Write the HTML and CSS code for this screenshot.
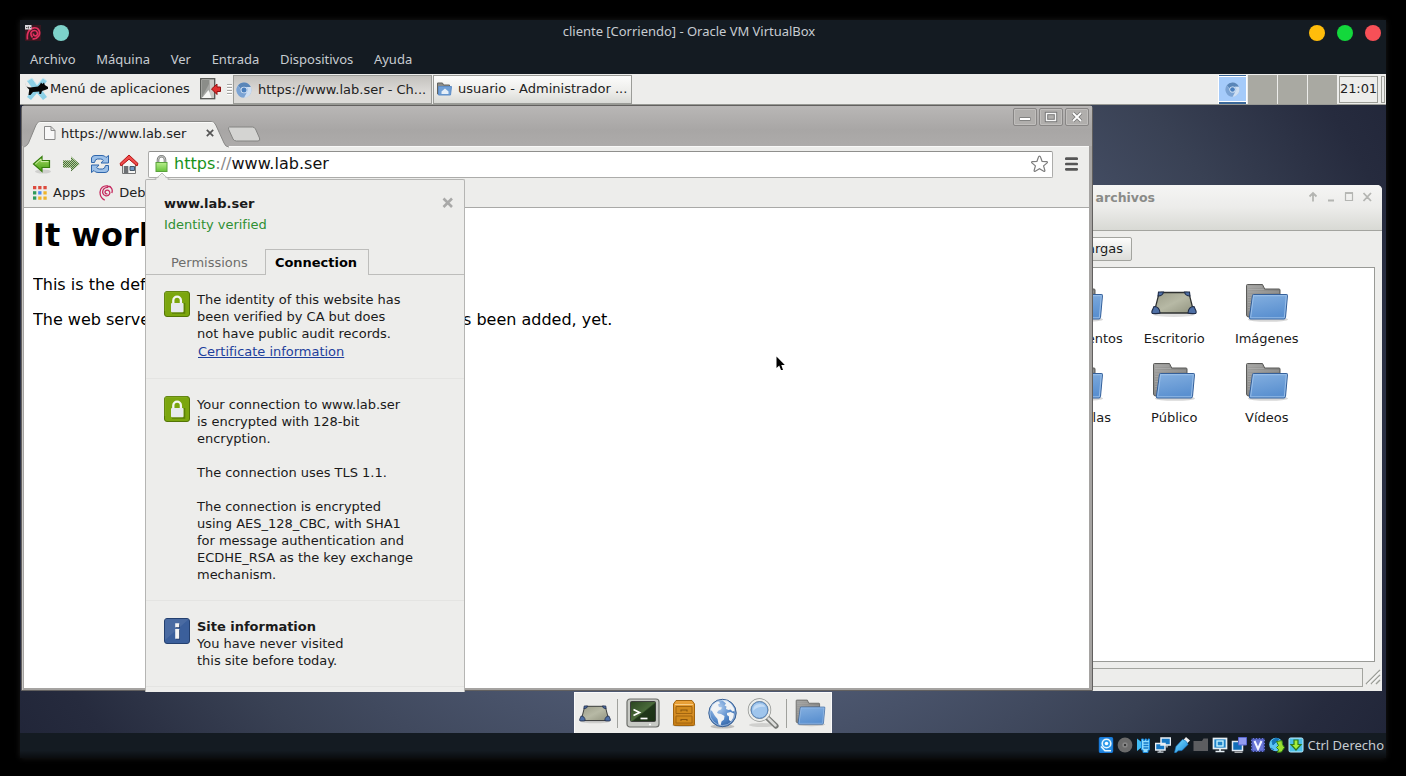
FILE: index.html
```html
<!DOCTYPE html>
<html lang="es">
<head>
<meta charset="utf-8">
<title>cliente [Corriendo] - Oracle VM VirtualBox</title>
<link rel="stylesheet" href="styles.css">
</head>
<body>
<svg class="defs" width="0" height="0" aria-hidden="true">
  <defs>
    <linearGradient id="gBlue" x1="0" y1="0" x2="0.3" y2="1"><stop offset="0" stop-color="#85b0e0"/><stop offset="1" stop-color="#5a90d0"/></linearGradient>
    <linearGradient id="gGrey" x1="0" y1="0" x2="1" y2="1"><stop offset="0" stop-color="#a4a4a2"/><stop offset="1" stop-color="#6c6c6a"/></linearGradient>
    <linearGradient id="gDesk" x1="0" y1="0" x2="1" y2="1"><stop offset="0" stop-color="#9b9c88"/><stop offset="0.5" stop-color="#b7b9a5"/><stop offset="1" stop-color="#8f917d"/></linearGradient>
    <linearGradient id="gGreen" x1="0" y1="0" x2="0" y2="1"><stop offset="0" stop-color="#a6d866"/><stop offset="1" stop-color="#46a012"/></linearGradient>
    <linearGradient id="gLock" x1="0" y1="0" x2="0" y2="1"><stop offset="0" stop-color="#b9ef8d"/><stop offset="1" stop-color="#67c23c"/></linearGradient>
    <linearGradient id="gTerm" x1="0" y1="0" x2="1" y2="1"><stop offset="0" stop-color="#2a4420"/><stop offset="0.5" stop-color="#4a6a3a"/><stop offset="0.55" stop-color="#20371a"/><stop offset="1" stop-color="#1c3015"/></linearGradient>
    <linearGradient id="gOrange" x1="0" y1="0" x2="0" y2="1"><stop offset="0" stop-color="#eba33a"/><stop offset="1" stop-color="#c57c13"/></linearGradient>
    <radialGradient id="gGlobe" cx="0.35" cy="0.3" r="0.8"><stop offset="0" stop-color="#b4cff0"/><stop offset="0.6" stop-color="#5287c9"/><stop offset="1" stop-color="#2e5c9c"/></radialGradient>
    <linearGradient id="gCyan" x1="0" y1="0" x2="1" y2="1"><stop offset="0" stop-color="#79e0ff"/><stop offset="1" stop-color="#1a86dc"/></linearGradient>
    <symbol id="folder" viewBox="0 0 44 40">
      <ellipse cx="23" cy="36.500" rx="20" ry="2.300" fill="#000" opacity="0.16"/>
      <path d="M1.500 2.500q0-1 1-1h15l2.200 4.500H34q1 0 1 1V34H4q-2.500 0-2.500-2z" fill="url(#gGrey)" stroke="#5a5a58"/>
      <path d="M3 4h14M3 6.500h16M3 9h31M3 12h4M3 14.500h3M3 17h3M3 19.500h3M3 22h2.500M3 24.500h2M3 27h2" stroke="#bbb" stroke-width="0.800" opacity="0.6"/>
      <path d="M7.500 12.500q0-1 1-1h33.300q.8 0 .7 1L40.500 34.500q-.2 1.500-1.600 1.500H5.500q-1.300 0-1.200-1.200z" fill="url(#gBlue)" stroke="#35609a"/>
      <path d="M8.500 12.700h32.800L39.300 34.800H5.600z" fill="none" stroke="#a5c6ec" stroke-width="0.800"/>
    </symbol>
    <symbol id="desk" viewBox="0 0 46 28">
      <ellipse cx="23" cy="23.500" rx="21" ry="2.500" fill="#000" opacity="0.13"/>
      <path d="M10 1.500h26q1.500 0 2.200 1.700L43 22H3L7.800 3.200Q8.500 1.500 10 1.500z" fill="url(#gDesk)" stroke="#2e3030" stroke-width="1.300"/>
      <path d="M7.500 1h5q-.8 4-5.500 4zM38.500 1h-5q.8 4 5.500 4zM3 15.500q5.500 0 6 6.500-1 .8-7.500.5-1-.5-.5-2.500zM43 15.500q-5.500 0-6 6.500 1 .8 7.500.5 1-.5.5-2.500z" fill="#4e6fa5" stroke="#1f2c48" stroke-width="1.100"/>
    </symbol>
    <symbol id="chromium" viewBox="0 0 16 16">
      <circle cx="8" cy="8" r="7.600" fill="#a3c0e4"/>
      <path d="M8 .4A7.600 7.600 0 0 1 14.800 5H8a3 3 0 0 0-3 2L2 3.500A7.600 7.600 0 0 1 8 .4z" fill="#5a86b8"/>
      <path d="M14.800 5A7.600 7.600 0 0 1 8 15.600l3-5.500A3.500 3.500 0 0 0 10.500 5z" fill="#cfdff2"/>
      <path d="M2 3.500A7.600 7.600 0 0 0 8 15.600l2.500-4.500Q6.500 12 5 8.600z" fill="#7ba3d3"/>
      <circle cx="8" cy="8" r="3.300" fill="#d6e4f5"/><circle cx="8" cy="8" r="2.500" fill="#4a7fbd"/>
    </symbol>
    <symbol id="badgelock" viewBox="0 0 26 26">
      <rect x="0.500" y="0.500" width="25" height="25" rx="2.500" fill="#7ba60e" stroke="#537505"/>
      <path d="M1 20V3q0-2 2-2h20" fill="none" stroke="#98bd3c" opacity="0.5"/>
      <path d="M9.300 13V9.500a3.800 3.800 0 0 1 7.600 0V13" fill="none" stroke="#f4f6f2" stroke-width="2.300"/>
      <path d="M8 22h12.500V12" fill="none" stroke="#466605" stroke-width="1.500" opacity="0.6"/>
      <rect x="7" y="12" width="12.500" height="9.300" rx="1" fill="#e7eaed"/>
    </symbol>
  </defs>
</svg>

<div class="vm">
  <header class="vm-title">
    <svg class="debian-app" width="16" height="16" viewBox="0 0 16 16"><rect width="16" height="16" fill="#3a1720"/><path d="M7.500 12.500C4.500 9 6 5.500 9.500 5.500c3 0 4 3.500 2 5-1.500 1-3.500 0-3-2M2.500 14.500C1.500 8 4 3.500 9 2.800c5-.5 7 5 4.500 8.500-1.500 2-4 3-6 2.500" fill="none" stroke="#e0305f" stroke-width="1.700"/><rect width="6.500" height="4.500" fill="#d7d7dd"/><path d="M1 2.500h1.500M3.500 1.500v2M5 2.500h1" stroke="#555"/></svg>
    <span class="dot teal"></span>
    <h1 class="vm-name">cliente [Corriendo] - Oracle VM VirtualBox</h1>
    <div class="dots"><span class="dot amber"></span><span class="dot green"></span><span class="dot red"></span></div>
  </header>
  <nav class="vm-menu"><span>Archivo</span><span>Máquina</span><span>Ver</span><span>Entrada</span><span>Dispositivos</span><span>Ayuda</span></nav>

  <main class="desktop">
    <div class="panel">
      <div class="appmenu">
        <svg width="24" height="24" viewBox="0 0 24 24"><path d="M2 4l5-3 5 7 6-7 4 3-6 8 6 8-4 3-6-7-6 7-4-3 6-8z" fill="#8dd0e6"/><path d="M2 4l5-3 5 7 6-7 4 3" fill="none" stroke="#c9e9f2"/><path d="M0 5c1 5 2 5 5 5.500l8-1 2-2 1-2 1.500 1.500 1.500-1.500.8 2.500 3.200 2v1.700L20 13l-3 1-1 3h-1.700v-2.500L8 15l-2.500 3H3.500l.7-5.500C2 11 .5 8 0 5z" fill="#060606"/></svg>
        <span>Menú de aplicaciones</span>
      </div>
      <svg class="logout" width="21" height="22" viewBox="0 0 21 22"><rect x="0.700" y="0.700" width="14" height="20" fill="#c9c9c5" stroke="#555753" stroke-width="1.300"/><path d="M2 2h7.500v11L4 19H2z" fill="#8b8d89"/><path d="M2 19L9.500 5v9z" fill="#a5a6a3"/><path d="M2 20l6.500-8 3 8z" fill="#f7f7f5"/><path d="M11.500 11l5.500-5v3h3.500v4.500H17v3z" fill="#e03030" stroke="#930f0f"/></svg>
      <span class="handle"></span>
      <div class="task active"><svg width="16" height="16"><use href="#chromium"/></svg><span>https://www.lab.ser - Ch...</span></div>
      <div class="task"><svg width="15" height="14" viewBox="0 0 15 14"><path d="M.5 1h5l1 2h6v9H.5z" fill="#8b8c88" stroke="#62635f"/><path d="M1.500 4.500h13l-1 8.500H1.500z" fill="#6f9fd5" stroke="#5d8cc6"/><path d="M4.500 9.500L8 6.500l3.500 3V12h-7z" fill="#e6eff8"/></svg><span>usuario - Administrador ...</span></div>
      <div class="pager"><i class="ws current"><svg width="15" height="15"><use href="#chromium"/></svg></i><i class="ws"></i><i class="ws"></i><i class="ws"></i></div>
      <time class="clock">21:01</time>
      <span class="endgrip"></span>
    </div>

    <section class="files">
      <header class="files-title"><b>usuario - Administrador de archivos</b>
        <svg width="64" height="12" viewBox="0 0 64 12" fill="none" stroke="#b4b5b2" stroke-width="1.800"><path d="M5 10.500V2M1.500 5.500L5 2l3.500 3.500M20 9.500h6M55.500 2l7.500 8M63 2l-7.500 8"/><path d="M37.500 2h7v7.500h-7z" stroke-width="1.200"/><path d="M37 2h8" /></svg>
      </header>
      <div class="files-path"><span class="crumb">Descargas</span></div>
      <div class="files-view">
        <figure><svg width="44" height="40"><use href="#folder"/></svg><figcaption>Documentos</figcaption></figure>
        <figure><svg class="deskicon" width="46" height="28"><use href="#desk"/></svg><figcaption>Escritorio</figcaption></figure>
        <figure><svg width="44" height="40"><use href="#folder"/></svg><figcaption>Imágenes</figcaption></figure>
        <figure><svg width="44" height="40"><use href="#folder"/></svg><figcaption>Plantillas</figcaption></figure>
        <figure><svg width="44" height="40"><use href="#folder"/></svg><figcaption>Público</figcaption></figure>
        <figure><svg width="44" height="40"><use href="#folder"/></svg><figcaption>Vídeos</figcaption></figure>
      </div>
      <footer class="files-status"><span></span><svg width="16" height="16" viewBox="0 0 16 16"><path d="M1 15L15 1M6 15l9-9M11 15l4-4" stroke="#9b9d97" stroke-width="1.400"/><path d="M2.500 15L15 2.500M7.500 15L15 7.500" stroke="#fff"/></svg></footer>
    </section>

    <section class="browser">
      <div class="strip">
        <div class="tab">
          <svg class="tabshape" width="206" height="28" viewBox="0 0 206 28"><path d="M0 26Q3 25 4.500 22L12 4Q13.300.5 17 .5H187q3.500 0 4.800 3.500L200 22q1.500 4 5 4V28H0z" fill="#ededeb"/><path d="M0 26Q3 25 4.500 22L12 4Q13.300.5 17 .5H187q3.500 0 4.800 3.500L200 22q1.500 4 5 4" fill="none" stroke="#888886"/><path d="M14 2.500q1-1 3-1H187q2 0 3 1" fill="none" stroke="#fafaf9"/></svg>
          <svg class="page" width="12" height="14" viewBox="0 0 12 14"><path d="M.5.5h6.500l4 4v9H.5zM7 .5v4h4" fill="#f8f8f8" stroke="#8a8a8a"/></svg>
          <span>https://www.lab.ser</span>
          <svg class="x" width="8" height="8" viewBox="0 0 8 8"><path d="M.8.800l6.400 6.400M7.200.800L.8 7.200" stroke="#555" stroke-width="1.700"/></svg>
        </div>
        <svg class="newtab" width="34" height="17" viewBox="0 0 34 17"><path d="M1.500 1H24.500q2 0 3 2l4 9q1 3-1.500 3H8.500q-2.500 0-3.500-2L.7 3.500Q0 1 1.500 1z" fill="#d4d4d2" stroke="#848482"/></svg>
        <div class="winbtns">
          <i><svg width="24" height="18" viewBox="0 0 24 18"><path d="M6.500 11h11" stroke="#777" stroke-width="3.600"/><path d="M7 11h10" stroke="#fff" stroke-width="2"/></svg></i>
          <i><svg width="24" height="18" viewBox="0 0 24 18"><rect x="7.500" y="5.500" width="9" height="7" fill="none" stroke="#777" stroke-width="3.400"/><rect x="7.500" y="5.500" width="9" height="7" fill="none" stroke="#f6f6f6" stroke-width="1.400"/></svg></i>
          <i><svg width="24" height="18" viewBox="0 0 24 18"><path d="M8 5l8 8M16 5l-8 8" stroke="#777" stroke-width="3.400"/><path d="M8 5l8 8M16 5l-8 8" stroke="#fff" stroke-width="1.800"/></svg></i>
        </div>
      </div>
      <div class="toolbar">
        <svg width="20" height="20" viewBox="0 0 20 20"><ellipse cx="11" cy="17.500" rx="8" ry="2" fill="#000" opacity="0.12"/><path d="M1.500 10L10 2.500V6.500h7.500v7H10v4z" fill="url(#gGreen)" stroke="#357d0d" stroke-width="1.200"/><path d="M3.300 10L9 5v2.600h7.500" fill="none" stroke="#d2f0ac"/></svg>
        <svg class="fwd" width="20" height="20" viewBox="0 0 20 20"><defs><pattern id="chk" width="2" height="2" patternUnits="userSpaceOnUse"><path d="M0 0h1v1H0zM1 1h1v1H1z" fill="#4a6a3a"/></pattern></defs><path d="M18.500 10L10 2.500V6.500H2v7h8v4z" fill="#b4d29c"/><path d="M18.500 10L10 2.500V6.500H2v7h8v4z" fill="url(#chk)"/></svg>
        <svg class="reload" width="20" height="20" viewBox="0 0 20 20" fill="#9cc0e8" stroke="#2f66ab"><path d="M1.500 8.500V4Q2 1.500 5 1.500h7q3 0 4 2L18.500 1.500V9H11l2.300-2.600Q12.500 5 10.500 5H7.500Q5 5 4.500 8.500z"/><path d="M18.500 11.500V16Q18 18.500 15 18.500H8q-3 0-4-2L1.500 18.500V11H9l-2.300 2.600Q7.500 15 9.500 15h3q2.500 0 3-3.500z"/></svg>
        <svg class="home" width="20" height="21" viewBox="0 0 20 21"><path d="M3.500 10v9.500h13V10L10 4z" fill="#f6f6f4" stroke="#777"/><path d="M4.800 12h4.500v7.500H4.800z" fill="#6d7073"/><path d="M11 12.500h4.500v4H11z" fill="#6f97c5" stroke="#456"/><path d="M10 1l9 8.500-1 2.500-8-6.800L2 12 1 9.500z" fill="#ef4a4a" stroke="#b51313"/></svg>
        <div class="omnibox">
          <svg width="13" height="18" viewBox="0 0 13 18"><path d="M3 8.500V4.800a3.500 3.500 0 0 1 7 0v3.700" fill="none" stroke="#7b7d7b" stroke-width="2.600"/><path d="M3 8.500V4.800a3.500 3.500 0 0 1 7 0v3.700" fill="none" stroke="#cfd1cf" stroke-width="0.900"/><rect x="1" y="7.500" width="11" height="9" fill="url(#gLock)" stroke="#5aa23c"/></svg>
          <span class="url"><em>https</em><s>://</s>www.lab.ser</span>
          <svg class="star" width="19" height="19" viewBox="0 0 19 19"><path d="M9.500 1.200q.8 0 1.200 1.300l1.400 4 4.600.2q1.200.2.400 1.200l-3.500 3 1.300 4.600q.1 1.300-1.200.8L9.500 13.800l-4.200 2.500q-1.300.5-1.200-.8l1.300-4.600-3.500-3q-.8-1 .4-1.200l4.600-.2 1.400-4q.4-1.300 1.200-1.300z" fill="#fff" stroke="#7d7d7d" stroke-width="1.200"/></svg>
        </div>
        <svg class="burger" width="13" height="14" viewBox="0 0 13 14"><path d="M1.300 1.700h10.400M1.300 7h10.400M1.300 12.300h10.400" stroke="#555" stroke-width="2.700" stroke-linecap="round"/></svg>
      </div>
      <div class="bookmarks">
        <svg width="14" height="14" viewBox="0 0 14 14"><path d="M0 0h3.300v3.300H0zM5.200 0h3.300v3.300H5.200zM10.400 0h3.300v3.300h-3.300z" fill="#dd4b3e"/><path d="M0 5.200h3.300v3.300H0z" fill="#2f9a5b"/><path d="M5.200 5.200h3.300v3.300H5.200z" fill="#4a8af4"/><path d="M10.400 5.200h3.300v3.300h-3.300zM5.200 10.400h3.300v3.300H5.200zM10.400 10.400h3.300v3.300h-3.300z" fill="#efb42b"/><path d="M0 10.400h3.300v3.300H0z" fill="#2f9a5b"/></svg>
        <span class="apps">Apps</span>
        <svg class="deb" width="14" height="16" viewBox="0 0 14 16"><path d="M8.500 8.800C6 9.500 5.200 6.500 7.200 5.400c2.600-1 4.300 1.600 3.300 3.600-1.500 3-6 2.300-6.700-.8C3 4.500 6 2 9.300 2.500M9 1C12.500 1.300 14 5 12.800 8M9 1C4.500 0 1 3 1 7.300c0 3.500 2 6.500 4.700 7.900" fill="none" stroke="#c5285e" stroke-width="1.300"/></svg>
        <span class="cut">Debian</span>
      </div>
      <article class="webpage">
        <h2>It works!</h2>
        <p>This is the default</p>
        <p class="split"><span>The web server</span><span>s been added, yet.</span></p>
      </article>
    </section>

    <aside class="popup">
      <svg class="arrow" width="18" height="9" viewBox="0 0 18 9"><path d="M0 9h1Q3 8.500 9 1.500 15 8.500 17 9z" fill="#ededeb"/><path d="M0 7.500q3 0 9-6.500 6 6.500 9 6.500" fill="none" stroke="#bcbcba"/></svg>
      <header>
        <div><b>www.lab.ser</b><span class="ok">Identity verified</span></div>
        <svg width="12" height="12" viewBox="0 0 12 12"><path d="M1.500 1.500l8.500 8.500M10 1.500L1.500 10" stroke="#a9a9a8" stroke-width="2.600"/></svg>
      </header>
      <div class="tabs"><span class="off">Permissions</span><span class="on">Connection</span><i></i></div>
      <section class="s1"><svg width="26" height="26"><use href="#badgelock"/></svg><div>The identity of this website has<br>been verified by CA but does<br>not have public audit records.<br><a>Certificate information</a></div></section>
      <section class="s2"><svg width="26" height="26"><use href="#badgelock"/></svg><div>Your connection to www.lab.ser<br>is encrypted with 128-bit<br>encryption.<br><br>The connection uses TLS 1.1.<br><br>The connection is encrypted<br>using AES_128_CBC, with SHA1<br>for message authentication and<br>ECDHE_RSA as the key exchange<br>mechanism.</div></section>
      <section class="s3"><svg width="26" height="26" viewBox="0 0 26 26"><rect x="0.500" y="0.500" width="25" height="25" rx="2.500" fill="#3b5f9b" stroke="#24406f"/><path d="M1 1h24L1 22z" fill="#fff" opacity="0.08"/><path d="M12 6.500h4V10h-4zM12 12h4v9.500h-4z" fill="#1f3764"/><path d="M11.200 5.300h4v3.900h-4zM11.200 11h4v9.800h-4z" fill="#f4f4f4"/></svg><div><b>Site information</b><br>You have never visited<br>this site before today.</div></section>
      <section class="s4"></section>
    </aside>

    <div class="dock">
      <svg class="d1" width="32" height="20"><use href="#desk"/></svg>
      <i></i>
      <svg class="d2" width="34" height="30" viewBox="0 0 34 30"><rect x="1" y="1" width="32" height="28" rx="3" fill="#c7c9c4" stroke="#6c6e6a" stroke-width="1.200"/><rect x="4.500" y="3.500" width="25" height="20" rx="1" fill="url(#gTerm)" stroke="#3c3e3b"/><path d="M7.500 11.500l6 3-6 3" fill="none" stroke="#fff" stroke-width="1.700"/><path d="M14.500 20.500h7" stroke="#fff" stroke-width="1.700"/><circle cx="24" cy="26.500" r="1" fill="#fff"/></svg>
      <svg class="d3" width="24" height="28" viewBox="0 0 24 28"><ellipse cx="12" cy="26" rx="12" ry="2" opacity="0.15"/><path d="M1.500 5L4 1.500h16L22.500 5v20.500q0 1-1 1h-19q-1 0-1-1z" fill="url(#gOrange)" stroke="#a2650f"/><path d="M3 5.500h18" stroke="#f7cc83"/><path d="M4 7.500h16v7H4zM4 17h16v7H4z" fill="#d18a1d" stroke="#a2650f"/><path d="M9 12.500v-1.500h6v1.500M9 22v-1.500h6V22" fill="none" stroke="#8a560d" stroke-width="1.100"/></svg>
      <svg class="d4" width="29" height="31" viewBox="0 0 29 31"><ellipse cx="14.500" cy="28.500" rx="12" ry="2" opacity="0.2"/><circle cx="14.500" cy="15" r="13.700" fill="url(#gGlobe)" stroke="#3c6295"/><path d="M4 7l4-3 3-.5 1 2-2 1 1 2.500 3 .5-1 2-2.500 1-1.500 2 1 1 3 .5 3.500 2-.5 3.500-2.500 2-1 4-2-1.500-1-5-2.500-3-1.500-2.500L4 13l-1.500-1zM14 2l5 .5 4 3 3 4.500.5 3-2 .5-2-2-2 .5-2.500-1 .5-2.500-2-1 1.500-2zM19 15l3.500-1 3.500 1.500-.5 4-2.500 4-2-1.500v-3.500l-2-1.500z" fill="#f1f3f5"/><circle cx="14.500" cy="15" r="12.600" fill="none" stroke="#c6daf2" opacity="0.6"/></svg>
      <svg class="d5" width="32" height="31" viewBox="0 0 32 31"><ellipse cx="15" cy="27" rx="13" ry="2" opacity="0.12"/><path d="M19.500 19L29 28" stroke="#777976" stroke-width="5.200" stroke-linecap="round"/><path d="M20 19l8.500 8.500" stroke="#dcdddb" stroke-width="2.500" stroke-linecap="round"/><circle cx="12.500" cy="12" r="10" fill="#a6c9ec" stroke="#8a8c89" stroke-width="3.400"/><circle cx="12.500" cy="12" r="10" fill="none" stroke="#eceeec" stroke-width="2"/><circle cx="12.500" cy="12" r="8.300" fill="#9fc5ec" stroke="#5a86ba"/><path d="M6 13q0-7 7-7 5 .5 5 3-7-1-12 4z" fill="#c4dcf5"/></svg>
      <i></i>
      <svg class="d6" width="31" height="28"><use href="#folder"/></svg>
    </div>

    <svg class="cursor" width="10" height="16" viewBox="0 0 10 16"><path d="M.5.500v11.500l2.700-2.600L5 14h2L5.300 9h3.500z" fill="#000"/></svg>
  </main>

  <footer class="vm-status">
    <svg viewBox="0 0 16 16"><rect x="1.500" y=".7" width="13" height="14.600" rx="1" fill="#2a8fe2" stroke="#1879d8" stroke-width="1.400"/><circle cx="8.500" cy="6.500" r="4.300" fill="#2f9bea" stroke="#e6f7ff" stroke-width="1.600"/><circle cx="8.500" cy="6.500" r="1.800" fill="#fff"/><path d="M3 9.500l4 4.200h6" stroke="#e6f7ff" stroke-width="1.600" fill="none"/></svg>
    <svg viewBox="0 0 16 16"><circle cx="8" cy="8" r="7.400" fill="#6b6b6b"/><circle cx="8" cy="8" r="2.700" fill="#858585"/><circle cx="8" cy="8" r="1" fill="#222"/></svg>
    <svg viewBox="0 0 16 16"><path d="M1 1.500l4.500 3.500v5.500L1 14z" fill="#41bcf5"/><path d="M5.500 2h2v1.500h1.500V2h1.500v1.500H12V2h1.500v11H12v2.500H7V13H5.500z" fill="#8fdcff" stroke="#1b87d8"/><path d="M7.500 6h5M7.500 8.500h5M7.500 11h5" stroke="#1478c8" stroke-width="1.300"/></svg>
    <svg viewBox="0 0 16 16"><path d="M6 1h9.500v7H6zM.5 6.500H10V13H.5z" fill="#1778c4" stroke="#e9eff5" stroke-width="1.500"/><path d="M12 8v2.500M5 13v2M2.500 15.200h6" stroke="#cbd3d9" stroke-width="1.300"/></svg>
    <svg viewBox="0 0 16 16"><path d="M9.500 3l2.500-3L16 3.500 13 6.500z" fill="#eee"/><path d="M.5 15.500L2 9.500 8.500 2.500q4 .5 5.500 5L8 13.500l-4 .3-2 2z" fill="url(#gCyan)" stroke="#1673c4" stroke-width=".6"/></svg>
    <svg viewBox="0 0 16 16"><path d="M.5 4H9l1.500-2.500H15v12.500H.5z" fill="#5c5d60"/></svg>
    <svg viewBox="0 0 16 16"><rect x="1.500" y="1.500" width="13" height="10" fill="#1f83c9" stroke="#e6eff4" stroke-width="1.700"/><rect x="5" y="4" width="6" height="5" fill="none" stroke="#c4f2ff" stroke-width="1.400"/><path d="M8 12v2M3.500 14.500h9" stroke="#e6eff4" stroke-width="1.700"/></svg>
    <svg viewBox="0 0 16 16"><path d="M1.500 4.500h10v9h-10z" fill="#126db9" stroke="#e1e9f1" stroke-width="1.500"/><path d="M3.500 15.200h8" stroke="#eee"/><path d="M7.500.5h8V8h-8z" fill="#929cf0" stroke="#5966cf"/></svg>
    <svg viewBox="0 0 16 16"><path d="M1 3.500h14M1 6.500h14M1 9.500h14M1 12.500h14M3.500 1v14M6.500 1v14M9.500 1v14M12.500 1v14" stroke="#8b96ee"/><rect x="2" y="2" width="12" height="12" fill="#6976d5" stroke="#4654b8"/><path d="M4.500 4l3.500 8 3.500-8" fill="none" stroke="#f3f5ff" stroke-width="2"/></svg>
    <svg viewBox="0 0 16 16"><circle cx="7" cy="7.500" r="6.800" fill="#5cc4f2"/><path d="M3 4q3-4 7-2L4 8zM2 11l3 2" fill="#1676b9" stroke="#1676b9"/><path d="M7.500 4.500l5.500-1 .5 4 2 3-3 4.500-4 .5 1-3-2-2 2-2z" fill="#9be032" stroke="#2d7b16"/></svg>
    <svg viewBox="0 0 16 16"><rect x="1" y="1" width="14" height="14" rx="1.500" fill="#4cc0ea" stroke="#bfefff"/><path d="M6 3h4v4.500h3l-5 5.500-5-5.500h3z" fill="#a5ee3a" stroke="#2e7a1c" stroke-width="1.200"/></svg>
    <span>Ctrl Derecho</span>
  </footer>
</div>
</body>
</html>
```

FILE: styles.css
```css
* { box-sizing: border-box; }
body { margin: 0; width: 1406px; height: 776px; overflow: hidden; background: #000; padding: 20px; font: 13px/17px "DejaVu Sans", sans-serif; color: #1a1a1a; }
svg { display: block; flex: none; }
i, em { font-style: normal; }
p, h1, h2, figure { margin: 0; }
.defs { position: absolute; }
.vm { width: 1366px; height: 738px; background: #141b22; box-shadow: 0 0 6px #1a1a1a; display: flex; flex-direction: column; }

.vm-title { height: 26px; display: flex; align-items: center; padding: 0 5px; gap: 12px; }
.vm-title .dots { display: flex; gap: 12px; }
.dot { width: 16px; height: 16px; border-radius: 50%; }
.teal { background: #7dd2ca; }
.amber { background: #ffbd0b; }
.green { background: #13d83c; }
.red { background: #f75057; }
.vm-name { flex: 1; text-align: center; font: 13px/18px "Noto Sans", sans-serif; color: #c7ccd1; letter-spacing: -.02px; padding: 0 0 5px; }
.vm-menu { height: 28px; display: flex; padding: 2px 0 0 10px; gap: 20.700px; font: 13px/22px "Noto Sans", sans-serif; color: #c7ccd1; }

.desktop { position: relative; height: 659px; flex: none; overflow: hidden; background: radial-gradient(ellipse 760px 620px at 50% 50%, #56627c 0%, #4f5a73 45%, #394154 75%, #262b3e 95%, #1c2033 115%); }
.panel { height: 31px; background: #ededeb; border-bottom: 1px solid #989994; display: flex; align-items: center; padding-left: 5px; color: #222; }
.appmenu { display: flex; align-items: center; gap: 1px; width: 175px; white-space: nowrap; letter-spacing: -.04px; }
.appmenu span { margin-top: -2px; }
.logout { margin-right: 6px; }
.handle { width: 5px; height: 11px; background: repeating-linear-gradient(#a5a5a2 0 1px, #fff 1px 2px, #ededeb 2px 3px); }
.task { width: 199px; height: 29px; margin-right: 1px; border: 1px solid #9b9c98; background: linear-gradient(#fcfcfb, #ecece9 60%, #d9dad6); display: flex; align-items: center; gap: 6px; padding-left: 3px; white-space: nowrap; }
.task span { margin-top: -2px; }
.task.active { margin-left: 1px; background: linear-gradient(#c4c2be, #dcdad7 60%, #dcdbd8); gap: 6px; padding-left: 2px; padding-top: 1px; }
.task.active span { margin-top: -1px; }
.pager { display: flex; gap: 1px; margin-left: auto; height: 29px; }
.ws { width: 29px; background: #a9a9a2; display: grid; place-items: center; }
.ws.current { background: #a5cbfa; border: 1px solid #fff; border-width: 0 1px; box-shadow: inset 0 1px #3b6899, inset 0 2px #fff, inset 0 -2px #3b6899, inset 0 -3px #fff; }
.clock { width: 39px; height: 27px; border: 1px solid #9b9c96; margin-left: 2px; line-height: 23px; display: flex; justify-content: center; letter-spacing: -.1px; color: #222; }
.endgrip { width: 4px; height: 27px; border: 1px solid #9b9c96; margin: 0 1px 0 3px; }

.files { position: absolute; left: 860px; top: 111px; width: 502px; height: 506px; background: #ededeb; border-radius: 5px 5px 0 0; display: flex; flex-direction: column; }
.files-title { height: 46px; background: linear-gradient(#f5f5f4, #ececea 50%, #d8d9d4); border-bottom: 1px solid #a3a49f; border-radius: 5px 5px 0 0; display: flex; justify-content: flex-end; padding: 4px 10px 0 0; font-size: 12.500px; color: #8a8b88; white-space: nowrap; }
.files-title svg { margin: 2px 0 0 153px; }
.files-path { height: 36px; display: flex; padding: 6px 0 0 154px; }
.crumb { width: 98px; height: 24px; border: 1px solid #a3a49f; border-radius: 2px; background: linear-gradient(#fcfcfb, #dcddd9); text-align: right; padding-right: 8px; line-height: 22px; }
.files-view { height: 395px; margin-right: 7px; border: 1px solid #999a96; background: #fff; display: grid; grid-template-columns: repeat(3, 92.500px); grid-auto-rows: 79px; align-content: start; padding: 12px 0 0 154.500px; }
.files-view figure { display: flex; flex-direction: column; align-items: center; justify-content: flex-end; height: 67px; gap: 7px; }
.files-view figcaption { height: 17px; }
.deskicon { margin-bottom: 4px; }
.files-status { display: flex; padding-top: 6px; gap: 2px; }
.files-status span { width: 483px; height: 19px; border: 1px solid #a3a49f; }
.files-status svg { margin-top: 1px; }

.browser { position: absolute; left: 1px; top: 31px; width: 1072px; height: 586px; background: #a5a3a1; border: 1px solid #62605f; border-radius: 4px 4px 0 0; padding: 0 3px 0 2px; box-shadow: inset 1px 0 #c9c7c5; }
.strip { height: 40px; display: flex; background: linear-gradient(#b9b7b6, #a8a6a5 60%, #adabaa); margin: 0 -3px 0 -2px; padding-left: 2px; }
.tab { position: relative; z-index: 1; width: 204px; height: 26px; margin-top: 15px; display: flex; align-items: center; padding: 0 0 2px 20px; color: #222; }
.tabshape { position: absolute; left: 0; top: 0; }
.tab .page, .tab span, .tab .x { position: relative; }
.tab span { margin-left: 5px; width: 145px; letter-spacing: -.01px; }
.newtab { margin-top: 20px; }
.winbtns { margin-left: auto; display: flex; gap: 2px; padding: 2px 3px 0 0; }
.winbtns i { width: 24px; height: 18px; border: 1px solid #888685; border-radius: 2px; background: #b0aeac; box-shadow: inset 0 0 0 1px #c0bebc; }
.winbtns i svg { margin: -1px; }
.toolbar { height: 34px; background: #ededeb; border-top: 1px solid #f8f8f7; display: flex; align-items: center; padding: 1px 0 0 8px; }
.fwd { margin-left: 9px; }
.reload { margin-left: 9px; }
.home { margin-left: 9px; }
.omnibox { width: 905px; height: 27px; margin-left: 9px; background: #fff; border: 1px solid #acacaa; border-top-color: #8f8f8d; border-radius: 2px; display: flex; align-items: center; padding: 0 3px 0 6px; }
.url { margin-left: 6px; font-size: 16px; line-height: 20px; flex: 1; color: #111; letter-spacing: .02px; }
.url em { color: #17921a; }
.url s { color: #888; text-decoration: none; }
.burger { margin-left: 12px; }
.bookmarks { height: 28px; background: #ededeb; border-bottom: 1px solid #a9a9a7; display: flex; align-items: center; padding: 0 0 2px 9px; color: #222; }
.apps { margin: 0 14px 0 6px; }
.deb { margin-right: 6px; }
.cut { width: 27px; overflow: hidden; white-space: nowrap; }
.webpage { height: 480px; background: #fff; padding: 7px 9px; font-size: 16px; line-height: 19px; color: #000; }
.webpage h2 { font-size: 32px; line-height: 40px; margin-bottom: 20px; }
.webpage h2, .webpage p, .split span:first-child { width: 113px; overflow: hidden; white-space: nowrap; }
.webpage p { margin-bottom: 16px; }
.webpage .split { display: flex; width: auto; gap: 317px; }

.popup { position: absolute; left: 125px; top: 105px; width: 320px; height: 513px; background: #ededeb; border: 1px solid #b5b5b3; border-bottom: 0; border-radius: 2px 2px 0 0; letter-spacing: -.02px; }
.arrow { position: absolute; left: 7px; top: -8px; }
.popup header { display: flex; justify-content: space-between; padding: 15px 10px 0 18px; height: 69px; }
.popup header div { display: flex; flex-direction: column; gap: 4px; }
.popup header svg { margin-top: 2px; }
.ok { color: #2f9033; }
.tabs { height: 26px; display: flex; }
.tabs span, .tabs i { border-bottom: 1px solid #bdbdbb; }
.off { width: 119px; padding: 5px 0 0 25px; color: #6d6d6c; }
.tabs .on { width: 104px; border: 1px solid #bdbdbb; border-bottom: 0; font-weight: bold; text-align: center; padding: 4px 2px 0 0; color: #000; }
.tabs i { flex: 1; }
.popup section { padding: 16px 0 0 18px; display: flex; gap: 7px; border-bottom: 1px solid #e4e4e2; }
.popup section div { white-space: nowrap; }
.popup a { color: #1d3f9c; text-decoration: underline; line-height: 19px; margin-left: 1px; }
.popup .s1 { height: 104px; }
.popup .s2 { height: 222px; padding-top: 17px; }
.popup .s3 { height: 86px; padding-top: 17px; }
.popup .s4 { border: 0; }

.dock { position: absolute; left: 554px; top: 618px; width: 258px; height: 41px; background: #ededeb; border: 1px solid #fafafa; border-bottom: 0; display: flex; align-items: center; padding-left: 4px; }
.dock i { width: 1px; height: 29px; background: #a0a19d; }
.d1 { margin: 3px 6px 0 0; }
.d2 { margin: 0 12px 0 8px; }
.d3 { margin-right: 12px; }
.d4 { margin-right: 10px; }
.d5 { margin-right: 7px; }
.d6 { margin-left: 8px; }
.cursor { position: absolute; left: 756px; top: 282px; }

.vm-status { height: 25px; display: flex; align-items: center; justify-content: flex-end; gap: 3.100px; padding: 0 2px 2px 0; font: 13px/18px "Noto Sans", sans-serif; color: #c7ccd1; background: linear-gradient(#141b22 70%, #0a0c0f); }
.vm-status svg { width: 16px; height: 16px; }
```
